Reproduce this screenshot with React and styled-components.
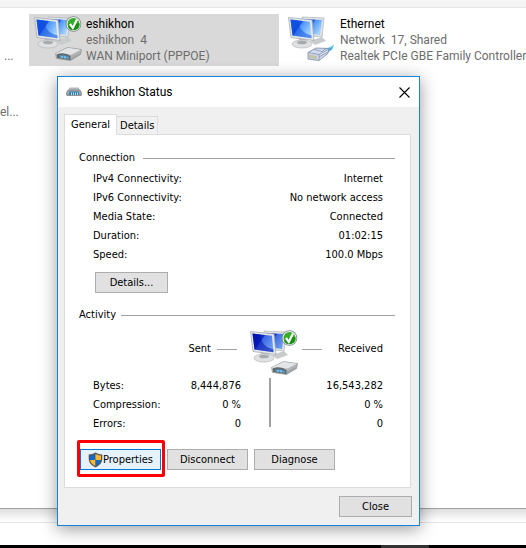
import { useState } from 'react';
import styled, { createGlobalStyle, css } from 'styled-components';

const GlobalStyle = createGlobalStyle`
  * {
    box-sizing: border-box;
  }

  body {
    margin: 0;
    background: #ffffff;
    font-family: Roboto, 'Noto Sans', sans-serif;
    font-size: 12px;
    color: #000000;
  }
`;

const Desktop = styled.div`
  position: relative;
  min-height: 100vh;
  overflow: hidden;

  display: flex;
  flex-direction: column;
`;

const Explorer = styled.main`
  flex: 1;
  border-bottom: 1px solid #a0a0a0;

  display: flex;
  flex-direction: column;
`;

const ExplorerBar = styled.div`
  height: 8px;
  background: #f5f5f5;
  border-bottom: 1px solid #e5e5e5;
`;

const Connections = styled.div`
  padding-top: 6px;

  display: grid;
  grid-template-columns: 20px 250px 1fr;
  column-gap: 9px;
`;

const CutColumn = styled.div`
  padding-top: 34px;
  overflow: hidden;
  white-space: nowrap;
  line-height: 16px;
  color: #6d6d6d;

  display: flex;
  flex-direction: column;
  gap: 40px;

  span:first-child {
    padding-left: 4px;
  }
`;

const ConnectionItem = styled.div`
  height: 52px;
  padding-left: ${(props) => (props.$selected ? 5 : 0)}px;
  line-height: 16px;
  white-space: nowrap;
  color: #6d6d6d;
  background: ${(props) => (props.$selected ? '#d9d9d9' : 'transparent')};

  display: flex;
  align-items: flex-start;
  gap: 2px;

  .labels {
    padding-top: 2px;
    white-space: pre;
  }

  .name {
    color: #000000;
  }
`;

const StatusStrip = styled.div`
  height: 36px;
  padding-top: 13px;
  background: linear-gradient(#dedede, #ffffff 12px);

  hr {
    margin: 0;
    border: 0;
    border-top: 1px solid #e5e5e5;
  }
`;

const Taskbar = styled.div`
  height: 3px;
  background: #000000;

  display: flex;
  justify-content: flex-end;

  div {
    width: 48px;
    margin-right: 97px;
    background: #333333;
  }
`;

const Dialog = styled.section`
  position: absolute;
  top: 76px;
  left: 57px;
  width: 363px;
  background: #f0f0f0;
  border: 1px solid #1883d7;
  box-shadow: 0 3px 16px rgba(0, 0, 0, 0.4);
`;

const TitleBar = styled.header`
  height: 30px;
  padding: 0 8px;
  background: #ffffff;

  display: flex;
  align-items: center;
  gap: 5px;

  h1 {
    flex: 1;
    margin: 0;
    font-size: 12px;
    font-weight: 400;
  }
`;

const CloseIconButton = styled.button`
  width: 14px;
  height: 14px;
  padding: 0;
  border: 0;
  background: transparent;

  display: flex;
  align-items: center;
  justify-content: center;
`;

const DialogBody = styled.div`
  padding: 7px 7px 8px 6px;
  font-family: 'DejaVu Sans Condensed', 'Noto Sans', sans-serif;
  font-size: 11px;
`;

const Tabs = styled.div`
  margin-bottom: -1px;

  display: flex;
  align-items: flex-end;
`;

const Tab = styled.button`
  height: 19px;
  padding: 0 3px;
  border: 1px solid #dcdcdc;
  border-left: 0;
  background: #f0f0f0;
  font: inherit;
  color: inherit;

  ${(props) =>
    props.$active &&
    css`
      height: 21px;
      padding: 0 6px;
      border-left: 1px solid #dcdcdc;
      border-bottom-color: #ffffff;
      background: #ffffff;
    `}
`;

const Panel = styled.div`
  margin-right: 1px;
  padding: 15px 15px 17px 14px;
  background: #ffffff;
  border: 1px solid #dcdcdc;
`;

const GroupTitle = styled.h2`
  margin: 0;
  font-size: 11px;
  font-weight: 400;
  line-height: 16px;

  display: flex;
  align-items: center;
  gap: ${(props) => props.$gap}px;

  &::after {
    content: '';
    flex: 1;
    height: 1px;
    background: #a0a0a0;
  }
`;

const Facts = styled.dl`
  margin: 3px 12px 0 14px;
  line-height: 19px;

  div {
    display: flex;
    justify-content: space-between;
  }

  dd {
    margin: 0;
  }
`;

const PushButton = styled.button`
  width: ${(props) => (props.$wide ? 81 : 73)}px;
  height: 21px;
  padding: 0;
  border: 1px solid ${(props) => (props.$focused ? '#0078d7' : '#adadad')};
  background: ${(props) => (props.$focused ? '#e5f1fb' : '#e1e1e1')};
  font: inherit;
  color: inherit;

  display: flex;
  align-items: center;
  justify-content: center;
`;

const DetailsRow = styled.div`
  padding: 8px 16px 14px;
`;

const ActivityHead = styled.div`
  margin-top: 5px;

  display: grid;
  grid-template-columns: 138px 20px 65px 20px 1fr;
  align-items: start;

  svg {
    margin-left: 13px;
  }

  span {
    padding-right: 6px;
    line-height: 42px;
    text-align: right;
  }

  span:last-child {
    padding-right: 12px;
  }

  i {
    height: 1px;
    margin-top: 21px;
    background: #a0a0a0;
  }
`;

const Counters = styled.table`
  width: 290px;
  margin: 0 0 0 14px;
  border-collapse: collapse;
  background: linear-gradient(#a0a0a0, #a0a0a0) no-repeat 176px 2px / 2px 49px;

  th,
  td {
    height: 19px;
    padding: 0;
    font-weight: 400;
    line-height: 19px;
    text-align: right;
  }

  th {
    width: 84px;
    text-align: left;
  }

  td:nth-child(2) {
    width: 64px;
  }
`;

const ButtonRow = styled.div`
  margin-top: 16px;
  padding-left: 1px;

  display: flex;
  gap: 6px;
`;

const Marked = styled.div`
  position: relative;

  &::after {
    content: '';
    position: absolute;
    top: -9px;
    right: -4px;
    bottom: -7px;
    left: -3px;
    border: 3px solid #fb0007;
    border-radius: 2px;
    pointer-events: none;
  }
`;

const DialogFooter = styled.footer`
  padding-top: 8px;

  display: flex;
  justify-content: flex-end;
`;

function NetworkIcon({ id, online, device, deep }) {
  return (
    <svg width="50" height="48" viewBox="0 0 50 48" aria-hidden="true">
      <defs>
        <linearGradient id={`${id}-screen`} x1="0" y1="0" x2="1" y2="0.6">
          <stop offset="0" stopColor={deep ? '#0014b0' : '#1a62ea'} />
          <stop offset="0.45" stopColor={deep ? '#1030c4' : '#1450e0'} />
          <stop offset="0.5" stopColor={deep ? '#3c68e4' : '#4c92f8'} />
          <stop offset="1" stopColor={deep ? '#6c9cf0' : '#a4d4ff'} />
        </linearGradient>
        <linearGradient id={`${id}-metal`} x1="0" y1="0" x2="1" y2="1">
          <stop offset="0" stopColor="#fafafa" />
          <stop offset="0.5" stopColor="#c4c6c8" />
          <stop offset="1" stopColor="#7d8083" />
        </linearGradient>
      </defs>
      <path d="M22 27l12-4 4 4-11 4z" fill="#c9cccd" />
      <path
        d="M14 3l22 1-2 19-20-2z"
        fill="#e0e3e5"
        stroke="#b0b4b7"
        strokeWidth="0.7"
      />
      <path d="M16 5l18 1-2 15-16-2z" fill={`url(#${id}-screen)`} />
      <path d="M11 24l7 1 1 5h-8z" fill="#b9bdc0" />
      <ellipse
        cx="14"
        cy="30"
        rx="10"
        ry="4"
        fill="#dfe1e2"
        stroke="#b4b8ba"
        strokeWidth="0.7"
      />
      <ellipse cx="14" cy="28.5" rx="5" ry="1.8" fill="#a7abae" />
      <path
        d="M0.5 3.5L24 6l2 20.5L3 23.5z"
        fill="#e6e9eb"
        stroke="#a7acb0"
        strokeWidth="0.8"
      />
      <path d="M2.5 5.5L22 7.8l1.5 16.5L4.5 21.5z" fill={`url(#${id}-screen)`} />
      <path
        d="M2.5 5.5l8 1c0 8 5 13 13 15v2.8L4.5 21.5z"
        fill={deep ? '#0008a8' : '#0a48dc'}
        opacity="0.5"
      />

      {device === 'modem' && (
        <g>
          <path
            d="M21.5 39.5l12-6 14 2-1 5-10 6-14-2z"
            fill={`url(#${id}-metal)`}
            stroke="#85888a"
            strokeWidth="0.6"
          />
          <path d="M23 39l11-5 12.5 1.8-9 4.7z" fill="#e3e4e5" />
          <path d="M22.5 40.5q8-3 14 1.5v4L23 44z" fill="#62676c" />
          <path d="M25 41.5q6-1 10 1.5v2l-9-1.5z" fill="#4d9ccc" />
          <path d="M28 42.3v1.5M31 42.5v1.8" stroke="#bfeaff" />
        </g>
      )}
      {device === 'plug' && (
        <g>
          <path d="M35 35q5 0 11-4.5l-2 5-6 4z" fill="#3cadd8" />
          <path
            d="M38 35q4-1 7-3"
            stroke="#83d6ee"
            strokeWidth="1.5"
            fill="none"
          />
          <path
            d="M20 38.5l8-4.5 13 .5-1 5-9 7-11-1.5z"
            fill="#d3dcee"
            stroke="#7684a4"
            strokeWidth="0.8"
          />
          <path
            d="M20 38.5l11 2V46M31 40.5l9-5M26 35.5l8 2 4-3M31 43l9-5"
            fill="none"
            stroke="#8492b0"
            strokeWidth="0.8"
          />
          <path
            d="M22 40.500v3.500M24 41v3.500M26 41.300v3.500M28 41.700v3.500"
            stroke="#a9a358"
            strokeWidth="0.9"
          />
        </g>
      )}
      {online && (
        <g>
          <circle cx="39.5" cy="10" r="7.8" fill="#7f8689" />
          <circle cx="39.5" cy="10" r="7" fill="#eef3ed" />
          <circle cx="39.5" cy="10" r="6" fill="#35ad29" />
          <path d="M34 12.5q5-4 11.5-3a6 6 0 0 1-11.5 3z" fill="#168f12" />
          <path
            d="M36 10l2.8 3.8L43 5.5"
            fill="none"
            stroke="#ffffff"
            strokeWidth="2.2"
          />
        </g>
      )}
    </svg>
  );
}

function ModemIcon() {
  return (
    <svg width="16" height="16" viewBox="0 0 16 16" aria-hidden="true">
      <path d="M3.5 3.5h9L14 6.5H2z" fill="#b4b8ba" />
      <path
        d="M2 6h12l1.5 2.5V11H.5V8.5z"
        fill="#a0a5a8"
        stroke="#7b8083"
        strokeWidth="0.6"
      />
      <path d="M3.5 7.5h9l.5 3.5H3z" fill="#2f7fb2" />
      <path
        d="M5.5 8.5V11M7.5 8.5V11M9.5 8.5V11M11.5 8.5V11"
        stroke="#c5edff"
        strokeWidth="0.9"
      />
      <path d="M.5 11.4h15" stroke="#696e71" strokeWidth="0.7" />
    </svg>
  );
}

function ShieldIcon() {
  return (
    <svg width="15" height="16" viewBox="0 0 15 16" aria-hidden="true">
      <path
        d="M7.5 .5Q10.5 2.5 14.3 2.5V7Q14 12.5 7.5 15.5Q1 12.5 .7 7V2.5Q4.500 2.5 7.5 .5z"
        fill="#54585a"
      />
      <path d="M7.5 2v6H2V3.5Q4.7 3.5 7.5 2z" fill="#1268c8" />
      <path d="M7.5 2v6H13V3.5Q10.3 3.5 7.5 2z" fill="#fbb92d" />
      <path d="M7.5 8v6Q2.5 11.5 2 8z" fill="#fbb92d" />
      <path d="M7.5 8v6Q12.5 11.5 13 8z" fill="#1268c8" />
    </svg>
  );
}

const facts = [
  ['IPv4 Connectivity:', 'Internet'],
  ['IPv6 Connectivity:', 'No network access'],
  ['Media State:', 'Connected'],
  ['Duration:', '01:02:15'],
  ['Speed:', '100.0 Mbps'],
];

const counters = [
  ['Bytes:', '8,444,876', '16,543,282'],
  ['Compression:', '0 %', '0 %'],
  ['Errors:', '0', '0'],
];

function Connection({ id, name, network, adapter, selected, online, device }) {
  return (
    <ConnectionItem $selected={selected}>
      <NetworkIcon id={id} online={online} device={device} />
      <div className="labels">
        <div className="name">{name}</div>
        <div>{network}</div>
        <div>{adapter}</div>
      </div>
    </ConnectionItem>
  );
}

function StatusDialog({ onClose }) {
  return (
    <Dialog role="dialog" aria-labelledby="status-title">
      <TitleBar>
        <ModemIcon />
        <h1 id="status-title">eshikhon Status</h1>
        <CloseIconButton aria-label="Close" onClick={onClose}>
          <svg width="11" height="11" viewBox="0 0 11 11">
            <path
              d="M.5 .5l10 10M10.5 .5l-10 10"
              stroke="#000000"
              strokeWidth="1.1"
            />
          </svg>
        </CloseIconButton>
      </TitleBar>
      <DialogBody>
        <Tabs role="tablist">
          <Tab role="tab" aria-selected="true" $active>
            General
          </Tab>
          <Tab role="tab" aria-selected="false">
            Details
          </Tab>
        </Tabs>
        <Panel role="tabpanel">
          <GroupTitle $gap={8}>Connection</GroupTitle>
          <Facts>
            {facts.map(([label, value]) => (
              <div key={label}>
                <dt>{label}</dt>
                <dd>{value}</dd>
              </div>
            ))}
          </Facts>
          <DetailsRow>
            <PushButton>Details...</PushButton>
          </DetailsRow>
          <GroupTitle $gap={5}>Activity</GroupTitle>
          <ActivityHead>
            <span>Sent</span>
            <i />
            <NetworkIcon id="activity" online device="modem" deep />
            <i />
            <span>Received</span>
          </ActivityHead>
          <Counters>
            <tbody>
              {counters.map(([label, sent, received]) => (
                <tr key={label}>
                  <th scope="row">{label}</th>
                  <td>{sent}</td>
                  <td>{received}</td>
                </tr>
              ))}
            </tbody>
          </Counters>
          <ButtonRow>
            <Marked>
              <PushButton $wide $focused>
                <ShieldIcon />
                Properties
              </PushButton>
            </Marked>
            <PushButton $wide>Disconnect</PushButton>
            <PushButton $wide>Diagnose</PushButton>
          </ButtonRow>
        </Panel>
        <DialogFooter>
          <PushButton onClick={onClose}>Close</PushButton>
        </DialogFooter>
      </DialogBody>
    </Dialog>
  );
}

export default function App() {
  const [open, setOpen] = useState(true);

  const onClose = () => {
    setOpen(false);
  };

  return (
    <>
      <GlobalStyle />
      <Desktop>
        <Explorer>
          <ExplorerBar />
          <Connections>
            <CutColumn>
              <span>...</span>
              <span>el...</span>
            </CutColumn>
            <Connection
              id="wan"
              name="eshikhon"
              network="eshikhon  4"
              adapter="WAN Miniport (PPPOE)"
              device="modem"
              selected
              online
            />
            <Connection
              id="ethernet"
              name="Ethernet"
              network="Network  17, Shared"
              adapter="Realtek PCIe GBE Family Controller"
              device="plug"
            />
          </Connections>
        </Explorer>
        <StatusStrip>
          <hr />
        </StatusStrip>
        <Taskbar>
          <div />
        </Taskbar>
        {open && <StatusDialog onClose={onClose} />}
      </Desktop>
    </>
  );
}
